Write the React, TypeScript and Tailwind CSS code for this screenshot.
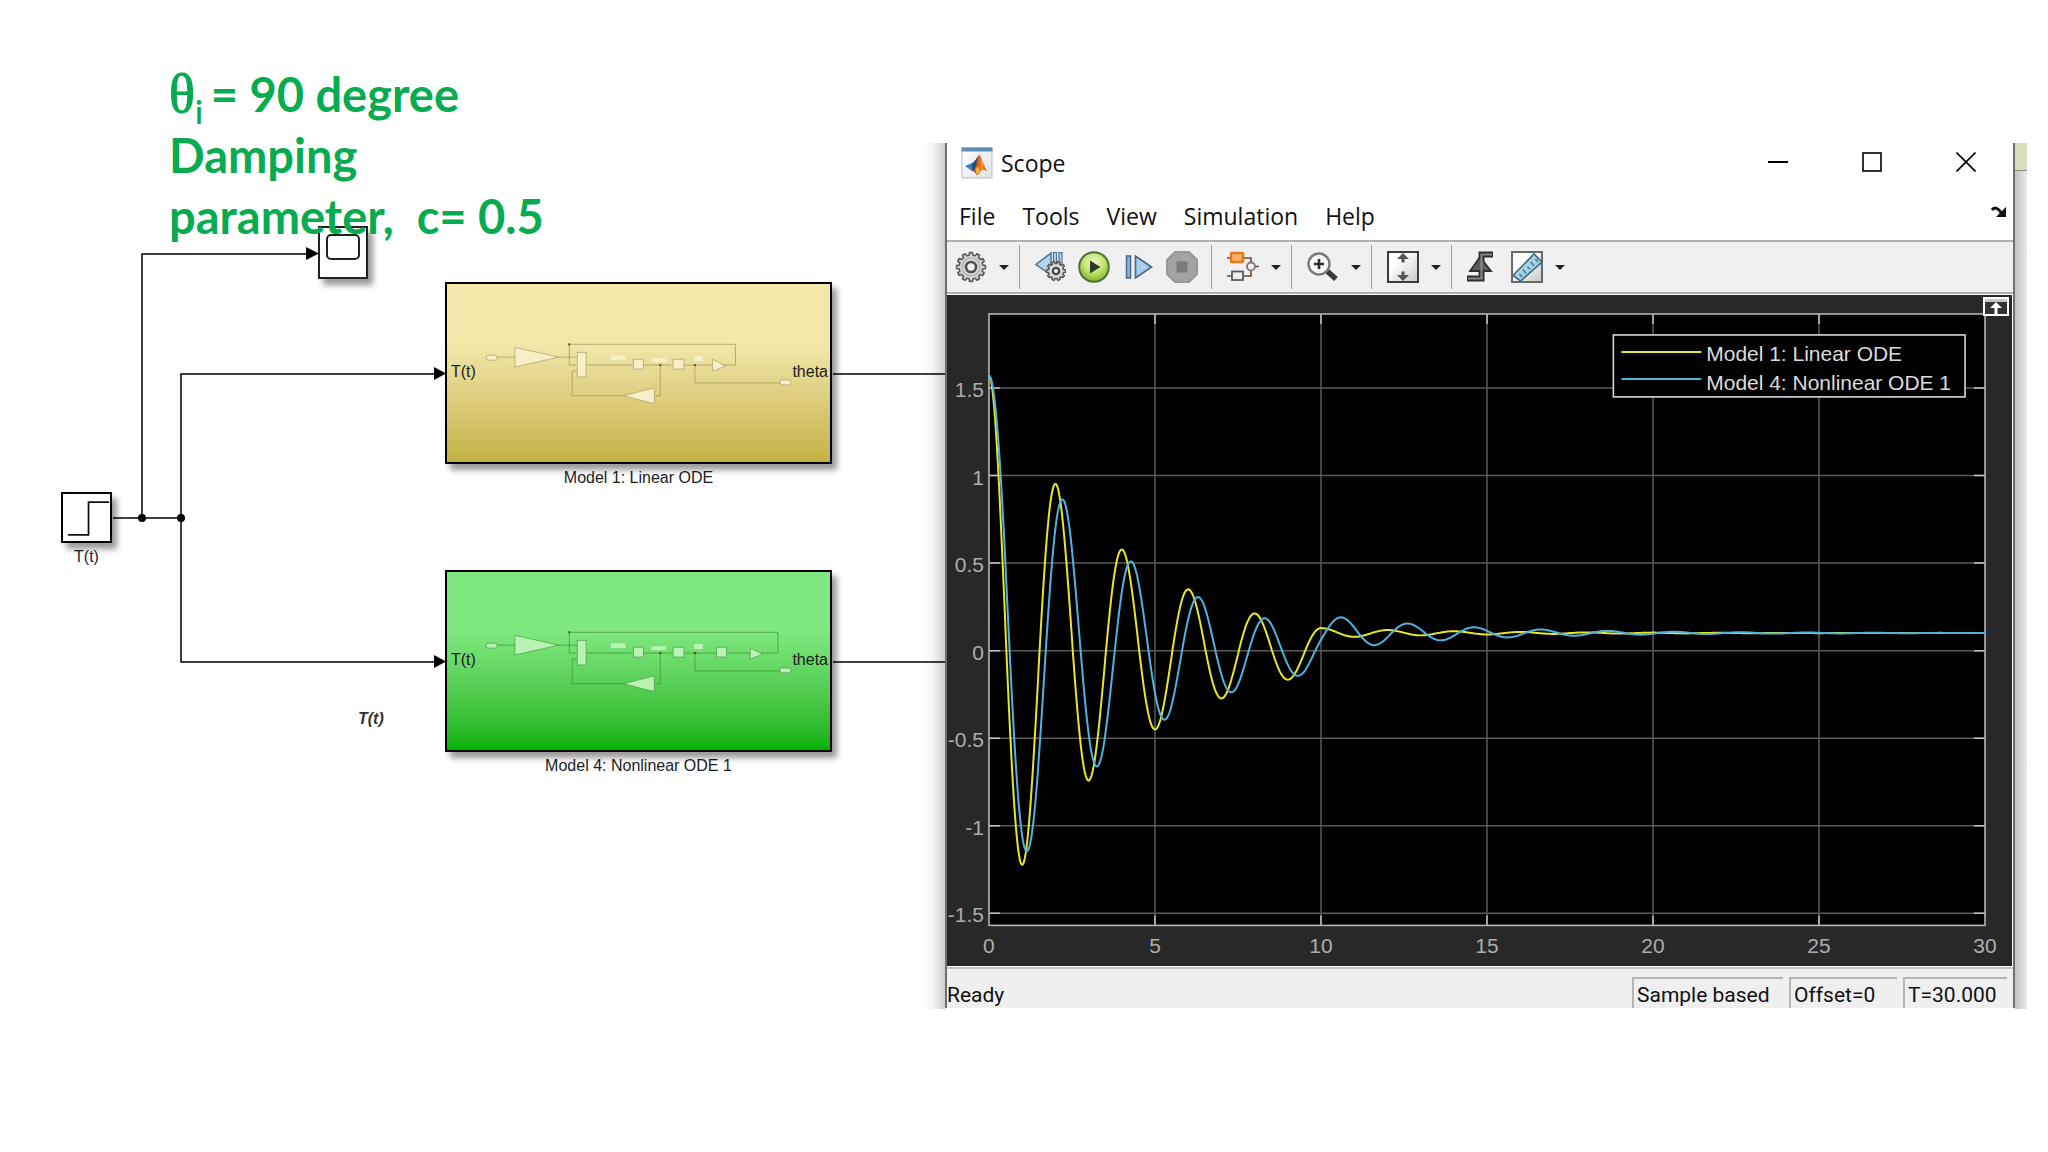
import React from "react";

/* ---------- pendulum simulation ---------- */

const DAMPING = 0.5;
const OMEGA_SQUARED = 9.93;
const PLOT = { left: 42, right: 1039, top: 19, bottom: 631, zero: 356, unit: 175.3 };

function simulate(restoring: (theta: number) => number) {
  const dt = 0.01;
  const points: string[] = [];
  let theta = Math.PI / 2;
  let speed = 0;
  const accel = (t: number, th: number, v: number) =>
    (t >= 10 ? 1 : 0) - DAMPING * v - OMEGA_SQUARED * restoring(th);
  for (let i = 0; i <= 3000; i++) {
    const t = i * dt;
    if (i % 3 === 0) {
      const x = PLOT.left + (t / 30) * (PLOT.right - PLOT.left);
      const y = PLOT.zero - theta * PLOT.unit;
      points.push(`${x.toFixed(1)},${y.toFixed(1)}`);
    }
    const k1x = speed;
    const k1v = accel(t, theta, speed);
    const k2x = speed + (dt / 2) * k1v;
    const k2v = accel(t, theta + (dt / 2) * k1x, k2x);
    const k3x = speed + (dt / 2) * k2v;
    const k3v = accel(t, theta + (dt / 2) * k2x, k3x);
    const k4x = speed + dt * k3v;
    const k4v = accel(t, theta + dt * k3x, k4x);
    theta += (dt / 6) * (k1x + 2 * k2x + 2 * k3x + k4x);
    speed += (dt / 6) * (k1v + 2 * k2v + 2 * k3v + k4v);
  }
  return points.join(" ");
}

const linearPoints = simulate((th) => th);
const nonlinearPoints = simulate((th) => Math.sin(th));

/* ---------- icons ---------- */

function gearPath(cx: number, cy: number, outer: number, inner: number, teeth: number) {
  const parts: string[] = [];
  const step = (Math.PI * 2) / teeth;
  const ring: [number, number][] = [
    [-0.3, inner],
    [-0.2, outer],
    [0.2, outer],
    [0.3, inner],
  ];
  for (let i = 0; i < teeth; i++) {
    for (const [o, r] of ring) {
      const a = (i + o) * step;
      parts.push(`${(cx + Math.cos(a) * r).toFixed(2)} ${(cy + Math.sin(a) * r).toFixed(2)}`);
    }
  }
  return `M${parts.join("L")}Z`;
}

function MatlabIcon() {
  return (
    <svg viewBox="0 0 32 32" className="size-8" aria-hidden="true">
      <defs>
        <linearGradient id="mlBg" x1="0" y1="0" x2="1" y2="1">
          <stop offset="0" stopColor="#ffffff" />
          <stop offset="1" stopColor="#dfe2e8" />
        </linearGradient>
        <linearGradient id="mlPeak" x1="0" y1="0" x2="1" y2="0">
          <stop offset="0" stopColor="#8c1d10" />
          <stop offset="0.45" stopColor="#e8641c" />
          <stop offset="0.7" stopColor="#f39a2a" />
          <stop offset="1" stopColor="#b5301a" />
        </linearGradient>
      </defs>
      <rect x="1" y="1" width="30" height="30" fill="url(#mlBg)" stroke="#b9bcc4" />
      <rect x="0.5" y="0.5" width="31" height="4" fill="#5f8bb0" />
      <path d="M4 19l7-3 4 4-4 4z" fill="#3f7fc0" />
      <path d="M11 16c3-1 5-6 7-8l-1 8-3 6-3 2z" fill="#24508c" />
      <path d="M18 7.500c2 1 5 11 8 17-3-2-5-2-7 1-1 1.500-2 2.500-3.500 2.500-1-2-2-4-4-4 3-2 4-9 6.500-16.500z" fill="url(#mlPeak)" />
      <path d="M14 22l3-3 2 5-3 4c-1-2-1-4-2-6z" fill="#f7b234" />
    </svg>
  );
}

function GearIcon() {
  return (
    <svg viewBox="0 0 32 32" className="size-8" aria-hidden="true">
      <path d={gearPath(16, 16, 14.5, 12, 12)} fill="#d6d6d6" stroke="#5a5a5a" strokeWidth="1.6" strokeLinejoin="round" />
      <circle cx="16" cy="16" r="9" fill="none" stroke="#b4b4b4" strokeWidth="1.5" />
      <circle cx="16" cy="16" r="5" fill="#f0f0f0" stroke="#4f4f4f" strokeWidth="2.6" />
    </svg>
  );
}

function StepBackIcon() {
  return (
    <svg viewBox="0 0 32 32" className="size-8" aria-hidden="true">
      <path d="M17 2v22L2 13.500z" fill="#b5d3ea" stroke="#4a7396" strokeWidth="1.5" />
      <path d="M19.500 1.500h3v16h-3zM25 1.500h3v14h-3z" fill="#b5d3ea" stroke="#4a7396" strokeWidth="1.200" />
      <path d={gearPath(22, 20, 9.5, 7.6, 10)} fill="#dadada" stroke="#555" strokeWidth="1.500" />
      <circle cx="22" cy="20" r="3.200" fill="#efefef" stroke="#444" strokeWidth="2.200" />
    </svg>
  );
}

function PlayIcon() {
  return (
    <svg viewBox="0 0 32 32" className="size-8" aria-hidden="true">
      <defs>
        <radialGradient id="playFill" cx="0.5" cy="0.35" r="0.65">
          <stop offset="0" stopColor="#f2fbd0" />
          <stop offset="0.55" stopColor="#bfe36a" />
          <stop offset="1" stopColor="#79b526" />
        </radialGradient>
      </defs>
      <circle cx="16" cy="16" r="14.800" fill="url(#playFill)" stroke="#52703a" strokeWidth="2" />
      <path d="M12 9.500v13l10.500-6.500z" fill="#2f3a2c" />
    </svg>
  );
}

function StepForwardIcon() {
  return (
    <svg viewBox="0 0 32 32" className="size-8" aria-hidden="true">
      <path d="M4.500 5h4v22h-4z" fill="#8fbbe0" stroke="#45688a" strokeWidth="1.500" />
      <path d="M13.500 5v22L29.500 16z" fill="#a9cdea" stroke="#45688a" strokeWidth="1.700" />
    </svg>
  );
}

function StopIcon() {
  return (
    <svg viewBox="0 0 32 32" className="size-8" aria-hidden="true">
      <path d="M9 1h14l8 8v14l-8 8H9l-8-8V9z" fill="#a3a3a3" stroke="#979797" strokeWidth="2" strokeLinejoin="round" />
      <rect x="10.500" y="10.500" width="11" height="11" fill="#7b7b7b" />
    </svg>
  );
}

function BlocksIcon() {
  return (
    <svg viewBox="0 0 32 32" className="size-8" aria-hidden="true">
      <path d="M0 7h24v6M0 25h24v-7M28 15.500h4" fill="none" stroke="#6b4a33" strokeWidth="1.600" />
      <rect x="4" y="2" width="12" height="9" rx="1" fill="#ffb066" stroke="#e07a1c" strokeWidth="2.600" />
      <rect x="5" y="20.500" width="11" height="8.500" fill="#ededed" stroke="#555" strokeWidth="1.700" />
      <circle cx="24" cy="15.500" r="4" fill="#efefef" stroke="#777" strokeWidth="1.800" />
    </svg>
  );
}

function ZoomIcon() {
  return (
    <svg viewBox="0 0 32 32" className="size-8" aria-hidden="true">
      <path d="M20 20l9 8" stroke="#3a3a3a" strokeWidth="5.500" strokeLinecap="butt" />
      <circle cx="12" cy="13" r="10.500" fill="#f7f7f7" stroke="#7a7a7a" strokeWidth="2.400" />
      <path d="M12 8v10M7 13h10" stroke="#2d2d2d" strokeWidth="2.600" />
    </svg>
  );
}

function FitIcon() {
  return (
    <svg viewBox="0 0 32 32" className="size-8" aria-hidden="true">
      <defs>
        <linearGradient id="fitBg" x1="0" y1="0" x2="1" y2="1">
          <stop offset="0.3" stopColor="#ffffff" />
          <stop offset="1" stopColor="#c9c9c9" />
        </linearGradient>
      </defs>
      <rect x="1" y="1" width="30" height="30" fill="url(#fitBg)" stroke="#3c3c3c" strokeWidth="2" />
      <path d="M16 2l6 6h-4.500v3.500h-3V8H10z" fill="#555" />
      <path d="M16 30l6-6h-4.500v-3.500h-3V24H10z" fill="#555" />
    </svg>
  );
}

function TriggerIcon() {
  return (
    <svg viewBox="0 0 32 32" className="size-8" aria-hidden="true">
      <path d="M29 3.500H17.500V27.500H3" fill="none" stroke="#2f2f2f" strokeWidth="6" />
      <path d="M16 6L27 20H6z" fill="#5b5b5b" stroke="#2f2f2f" strokeWidth="1.800" />
      <path d="M28 3.500H17.500V27.500H4" fill="none" stroke="#858585" strokeWidth="2.200" />
    </svg>
  );
}

function RulerIcon() {
  return (
    <svg viewBox="0 0 32 32" className="size-8" aria-hidden="true">
      <rect x="1" y="1" width="30" height="30" fill="url(#fitBg)" stroke="#5b5b5b" strokeWidth="1.800" />
      <path d="M2 24.500L23 3l8 8L9.500 30z" fill="#a6d3e6" stroke="#3f6b82" strokeWidth="1.600" />
      <path d="M11 26l-2.500-3M15 22.500l-3-4M19 18.500l-2.500-3M23 15l-3-4M27 11l-2.500-3" stroke="#3f7d99" strokeWidth="1.500" />
    </svg>
  );
}

function DockArrowIcon() {
  return (
    <svg viewBox="0 0 16 12" className="h-3 w-4" aria-hidden="true">
      <path d="M1 4c3-3.500 6-2 9.500 3" fill="none" stroke="#111" strokeWidth="3" />
      <path d="M15 1v10H5z" fill="#111" />
    </svg>
  );
}

/* ---------- toolbar pieces ---------- */

function ToolButton({ label, children }: { label: string; children: React.ReactNode }) {
  return (
    <button type="button" aria-label={label} className="flex size-8 shrink-0 items-center justify-center">
      {children}
    </button>
  );
}

function MenuCaret({ label }: { label: string }) {
  return (
    <button type="button" aria-label={label} className="flex h-8 w-6 shrink-0 items-center justify-center">
      <svg viewBox="0 0 10 5" className="h-[5px] w-2.5" aria-hidden="true">
        <path d="M0 0h10L5 5z" fill="#222" />
      </svg>
    </button>
  );
}

function ToolGroup({ spacing, children }: { spacing: string; children: React.ReactNode }) {
  return (
    <div className={`flex h-11 items-center border-r border-[#9a9a9a] last:border-r-0 ${spacing}`}>{children}</div>
  );
}

/* ---------- diagram pieces ---------- */

function Thumbnail({ nonlinear }: { nonlinear: boolean }) {
  const fill = nonlinear ? "#b9f2b4" : "#f7efc8";
  const line = nonlinear ? "#3d8f3a" : "#9c935a";
  return (
    <svg viewBox="0 0 384 180" className="absolute inset-0 size-full" aria-hidden="true">
      <g fill="none" stroke={line} strokeOpacity="0.7">
        <path d={nonlinear ? "M48 74H130M130 82H122V61H333V82H140" : "M48 74H130M130 82H122V61H290V82H140"} />
        <path d="M130 88H125V113H178M209 113H214V82M249 82V100H336" />
      </g>
      <g fill={fill} stroke={line} strokeWidth="0.6">
        <rect x="38" y="72" width="11" height="5" rx="2" />
        <path d="M67 64v20l44-10z" />
        <rect x="130" y="69" width="9" height="25" />
        <rect x="187" y="76" width="10" height="10" />
        <rect x="227" y="76" width="11" height="10" />
        <path d="M208 105v16l-31-8z" />
        <rect x="335" y="97" width="11" height="5" rx="2" />
        {nonlinear && <rect x="271" y="76" width="10" height="10" />}
        <path d={nonlinear ? "M305 77v11l13-5z" : "M267 76v12l13-5z"} />
      </g>
      <g fill={fill}>
        <rect x="164" y="72" width="15" height="5" />
        <rect x="205" y="75" width="15" height="4" />
        <rect x="248" y="73" width="9" height="5" />
      </g>
      <g fill="#4a4a20">
        <rect x="121" y="60" width="2" height="2" />
        <rect x="213" y="81" width="2" height="2" />
        <rect x="248" y="81" width="2" height="2" />
      </g>
    </svg>
  );
}

function ModelBlock({ name, nonlinear, place, tint }: { name: string; nonlinear: boolean; place: string; tint: string }) {
  return (
    <figure className={`absolute left-[445px] w-[387px] ${place}`}>
      <div
        className={`relative flex h-[182px] items-center justify-between border-2 border-black pr-0.5 pb-0.5 pl-1 shadow-[5px_6px_6px_rgba(0,0,0,0.4)] ${tint}`}
      >
        <Thumbnail nonlinear={nonlinear} />
        <span className="relative">T(t)</span>
        <span className="relative">theta</span>
      </div>
      <figcaption className="pt-1 text-center">{name}</figcaption>
    </figure>
  );
}

function Diagram() {
  return (
    <section
      aria-label="Block diagram"
      className="relative min-h-[820px] overflow-hidden font-['Liberation_Sans',sans-serif] text-base leading-5 text-[#1c1c1c]"
    >
      <div className="absolute top-[143px] right-0 h-[866px] w-6 bg-linear-to-r from-white via-[#f4f4f4] to-[#cfcfcf]" />

      <svg className="absolute inset-0 size-full" aria-hidden="true">
        <g fill="none" stroke="#000" strokeWidth="1.500">
          <path d="M113 518H181M142 518V254H308M434 374H181V662H434" />
          <line x1="833" y1="374" x2="100%" y2="374" />
          <line x1="833" y1="662" x2="100%" y2="662" />
        </g>
        <circle cx="142" cy="518" r="4" />
        <circle cx="181" cy="518" r="4" />
        <path d="M306 247l13 6.500-13 6.500zM434 367l12 6.500-12 6.500zM434 655l12 6.500-12 6.500z" />
      </svg>

      <div className="absolute top-[226px] left-[318px] h-[53px] w-[50px] border-2 border-[#222] bg-white p-1.5 shadow-[5px_6px_6px_rgba(0,0,0,0.4)]">
        <div className="h-[26px] w-full rounded-[5px] border-2 border-[#222]" />
      </div>

      <figure className="absolute top-[492px] left-[61px] w-[51px]">
        <div className="border-2 border-black bg-white shadow-[5px_6px_6px_rgba(0,0,0,0.4)]">
          <svg viewBox="0 0 46 46" className="w-full" aria-hidden="true">
            <path d="M5 40H25V8H45" fill="none" stroke="#111" strokeWidth="1.700" />
          </svg>
        </div>
        <figcaption className="pt-1 text-center">T(t)</figcaption>
      </figure>

      <ModelBlock
        name="Model 1: Linear ODE"
        nonlinear={false}
        place="top-[282px]"
        tint="bg-linear-to-b from-[#f2e8aa] from-33% to-[#c4b143]"
      />
      <ModelBlock
        name="Model 4: Nonlinear ODE 1"
        nonlinear
        place="top-[570px]"
        tint="bg-linear-to-b from-[#80e880] from-33% to-[#00b200]"
      />

      <p className="absolute top-[709px] left-[358px] font-bold text-[#333] italic">T(t)</p>

      <h1 className="absolute top-16 left-[169px] font-['Lato',sans-serif] text-[47px] leading-[61px] font-bold whitespace-pre text-[#07ab50]">
        <span className="font-['Liberation_Serif',serif] text-[54px] leading-none font-normal [-webkit-text-stroke:1px_#07ab50]">θ</span>
        <sub className="bottom-[-12px] mr-2 text-[32px] leading-none font-semibold">i</sub>= 90 degree
        {"\nDamping\nparameter,  c= 0.5"}
      </h1>
    </section>
  );
}

/* ---------- scope chart ---------- */

const xTicks = [0, 5, 10, 15, 20, 25, 30];
const yTicks = [1.5, 1, 0.5, 0, -0.5, -1, -1.5];

function ScopeChart() {
  const { left, right, top, bottom, zero, unit } = PLOT;
  const xAt = (v: number) => left + (v / 30) * (right - left);
  const yAt = (v: number) => zero - v * unit;
  return (
    <svg
      viewBox="0 0 1066 672"
      className="block w-full bg-[#282828] font-['Liberation_Sans',sans-serif]"
      role="img"
      aria-label="Pendulum angle over time"
    >
      <rect x={left} y={top} width={right - left} height={bottom - top} fill="#000" />
      {xTicks.slice(1, -1).map((v) => (
        <g key={v}>
          <line x1={xAt(v)} x2={xAt(v)} y1={top} y2={bottom} stroke="#5a5a5a" strokeWidth="1.500" />
          <path d={`M${xAt(v)} ${top}v10M${xAt(v)} ${bottom}v-10`} stroke="#c4c4c4" strokeWidth="1.500" />
        </g>
      ))}
      {yTicks.map((v) => (
        <g key={v}>
          <line x1={left} x2={right} y1={yAt(v)} y2={yAt(v)} stroke="#5a5a5a" strokeWidth="1.500" />
          <path d={`M${left} ${yAt(v)}h11M${right} ${yAt(v)}h-11`} stroke="#c4c4c4" strokeWidth="1.500" />
        </g>
      ))}
      <rect x={left} y={top} width={right - left} height={bottom - top} fill="none" stroke="#b4b4b4" strokeWidth="1.600" />
      <polyline points={linearPoints} fill="none" stroke="#e6e62b" strokeWidth="2" strokeLinejoin="round" />
      <polyline points={nonlinearPoints} fill="none" stroke="#4fb3e0" strokeWidth="2" strokeLinejoin="round" />
      <g fill="#adadad" fontSize="21">
        {xTicks.map((v) => (
          <text key={v} x={xAt(v)} y={659} textAnchor="middle">
            {v}
          </text>
        ))}
        {yTicks.map((v) => (
          <text key={v} x={37} y={yAt(v) + 9} textAnchor="end">
            {v}
          </text>
        ))}
      </g>
      <rect x="667" y="40" width="352" height="62" fill="#000" stroke="#d8d8d8" strokeWidth="1.600" />
      <line x1="675" x2="755" y1="57" y2="57" stroke="#e6e62b" strokeWidth="2" />
      <line x1="675" x2="755" y1="84" y2="84" stroke="#4fb3e0" strokeWidth="2" />
      <g fill="#dcdcdc" fontSize="21">
        <text x="760" y="66">Model 1: Linear ODE</text>
        <text x="760" y="95">Model 4: Nonlinear ODE 1</text>
      </g>
      <rect x="1038" y="3" width="24" height="17" fill="#333" stroke="#fff" strokeWidth="2" />
      <rect x="1039" y="4" width="22" height="3" fill="#c8c8c8" />
      <path d="M1050 7l6 6h-4.500v6h-3v-6H1044z" fill="#fff" />
    </svg>
  );
}

/* ---------- scope window ---------- */

const menus = ["File", "Tools", "View", "Simulation", "Help"];

function StatusCell({ width, children }: { width: string; children: React.ReactNode }) {
  return <span className={`border-t-2 border-l-2 border-[#b5b5b5] pl-[3px] ${width}`}>{children}</span>;
}

function ScopeWindow() {
  return (
    <section
      aria-label="Scope"
      className="mt-[143px] self-start border-x-2 border-[#6f6f6f] bg-white font-['Open_Sans',sans-serif] text-[#111]"
    >
      <header className="flex h-10 items-center pl-3.5">
        <MatlabIcon />
        <h2 className="ml-2 text-[23px] leading-8">Scope</h2>
        <div className="ml-auto flex h-[38px] self-start">
          <button type="button" aria-label="Minimize" className="flex w-[94px] items-center justify-center">
            <svg viewBox="0 0 20 20" className="size-5" aria-hidden="true">
              <path d="M0 10h20" stroke="#000" strokeWidth="2" />
            </svg>
          </button>
          <button type="button" aria-label="Maximize" className="flex w-[94px] items-center justify-center">
            <svg viewBox="0 0 20 20" className="size-5" aria-hidden="true">
              <rect x="1" y="1" width="18" height="18" fill="none" stroke="#000" strokeWidth="1.600" />
            </svg>
          </button>
          <button type="button" aria-label="Close" className="flex w-[94px] items-center justify-center">
            <svg viewBox="0 0 20 20" className="size-5" aria-hidden="true">
              <path d="M.500.500l19 19M19.500.500l-19 19" stroke="#000" strokeWidth="1.600" />
            </svg>
          </button>
        </div>
      </header>

      <nav className="flex h-[57px] items-center gap-[27px] pt-3 pr-1.5 pb-1 pl-3 text-[23px] leading-8">
        {menus.map((m) => (
          <button key={m} type="button">
            {m}
          </button>
        ))}
        <button type="button" aria-label="Dock scope" className="-mt-2 ml-auto">
          <DockArrowIcon />
        </button>
      </nav>

      <div className="flex h-[54px] items-center border-y-2 border-[#b0b0b0] bg-[#f0f0f0]">
        <ToolGroup spacing="gap-[5px] pr-[3px] pl-2">
          <ToolButton label="Configuration properties"><GearIcon /></ToolButton>
          <MenuCaret label="Configuration menu" />
        </ToolGroup>
        <ToolGroup spacing="gap-3 pr-[13px] pl-3.5">
          <ToolButton label="Stepping options"><StepBackIcon /></ToolButton>
          <ToolButton label="Run"><PlayIcon /></ToolButton>
          <ToolButton label="Step forward"><StepForwardIcon /></ToolButton>
          <ToolButton label="Stop"><StopIcon /></ToolButton>
        </ToolGroup>
        <ToolGroup spacing="gap-[5px] pr-[3px] pl-[15px]">
          <ToolButton label="Highlight block"><BlocksIcon /></ToolButton>
          <MenuCaret label="Highlight menu" />
        </ToolGroup>
        <ToolGroup spacing="gap-[5px] pr-[3px] pl-[15px]">
          <ToolButton label="Zoom"><ZoomIcon /></ToolButton>
          <MenuCaret label="Zoom menu" />
        </ToolGroup>
        <ToolGroup spacing="gap-[5px] pr-[3px] pl-[15px]">
          <ToolButton label="Scale axes"><FitIcon /></ToolButton>
          <MenuCaret label="Scale menu" />
        </ToolGroup>
        <ToolGroup spacing="gap-[15px] pl-3">
          <ToolButton label="Triggers"><TriggerIcon /></ToolButton>
          <div className="flex items-center gap-[5px]">
            <ToolButton label="Cursor measurements"><RulerIcon /></ToolButton>
            <MenuCaret label="Measurements menu" />
          </div>
        </ToolGroup>
      </div>

      <div className="border-y border-white pr-px">
        <ScopeChart />
      </div>

      <footer className="flex h-[41px] items-stretch gap-1.5 border-t-2 border-[#c4c4c4] bg-[#efefef] pt-2 pr-1.5 font-['Roboto',sans-serif] text-[21px] leading-8">
        <span className="mr-auto pt-0.5">Ready</span>
        <StatusCell width="w-[151px]">Sample based</StatusCell>
        <StatusCell width="w-[108px]">Offset=0</StatusCell>
        <StatusCell width="w-[104px]">T=30.000</StatusCell>
      </footer>
    </section>
  );
}

export default function App() {
  return (
    <main className="grid min-h-screen grid-cols-[945fr_1070fr_12fr_21fr] bg-white">
      <Diagram />
      <ScopeWindow />
      <aside className="mt-[143px] flex h-[866px] flex-col" aria-hidden="true">
        <div className="h-7 border-b border-[#8a8a78] bg-[#d9dbbb]" />
        <div className="flex-1 bg-linear-to-r from-[#c4c4c4] to-[#e9e9e9]" />
      </aside>
    </main>
  );
}
